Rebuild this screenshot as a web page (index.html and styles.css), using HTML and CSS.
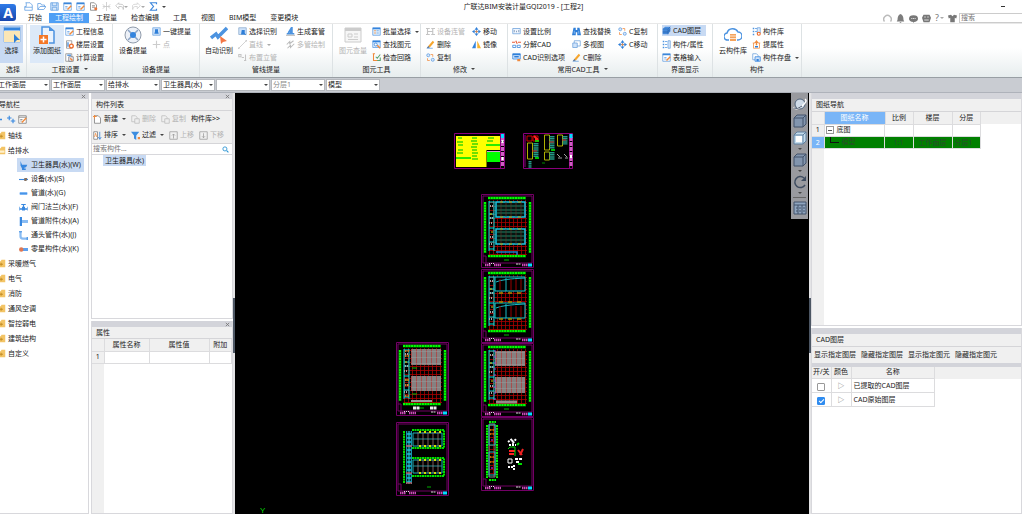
FILE: index.html
```html
<!DOCTYPE html>
<html lang="zh-CN">
<head>
<meta charset="utf-8">
<title>广联达BIM安装计量GQI2019 - [工程2]</title>
<link rel="stylesheet" href="styles.css">
</head>
<body>
<svg class="defs" aria-hidden="true">
  <defs>
    <symbol id="close" viewBox="0 0 12 12"><path d="M2 2l8 8M10 2l-8 8" stroke="#777" stroke-width="2"/></symbol>
    <symbol id="doc" viewBox="0 0 12 12"><path d="M2 1h6l3 3v7H1V6h2V1" fill="none" stroke="#5d9be0"/><path d="M1 7h10" stroke="#5d9be0"/></symbol>
    <symbol id="open" viewBox="0 0 12 12"><path d="M1 10V2h4l1 2h4v2M1 10l3-4h8l-3 4z" fill="none" stroke="#5d9be0"/></symbol>
    <symbol id="save" viewBox="0 0 12 12"><path d="M1 1h10v10H1z" fill="#d7e8fb" stroke="#5d9be0"/><path d="M3 1v4h6V1M3 11V7h6v4" fill="none" stroke="#5d9be0"/></symbol>
    <symbol id="form" viewBox="0 0 12 12"><path d="M1 1h10v10H1z" fill="#fff" stroke="#5d9be0"/><path d="M1 2h10" stroke="#3b86d8" stroke-width="2"/><path d="M3 6h3M3 8h3" stroke="#5d9be0"/><path d="M6 10l5-5" stroke="#f08a3c" stroke-width="2"/></symbol>
    <symbol id="page" viewBox="0 0 12 12"><path d="M2 1h5l3 3v7H2z" fill="#fff" stroke="#777"/><path d="M4 5h4M4 7h4" stroke="#777"/><circle cx="9" cy="9" r="2" fill="#e8743b"/></symbol>
    <symbol id="split" viewBox="0 0 12 12"><path d="M6 0v12M1 3l3 3-3 3M11 3L8 6l3 3M1 6h10" fill="none" stroke="#c4c4c4"/></symbol>
    <symbol id="undo" viewBox="0 0 12 12"><path d="M5 1L1 5l4 4V6h3q3 0 3 4 2-7-3-7H5z" fill="none" stroke="#bbb"/></symbol>
    <symbol id="redo" viewBox="0 0 12 12"><path d="M7 1l4 4-4 4V6H4q-3 0-3 4-2-7 3-7h3z" fill="none" stroke="#ccc"/></symbol>
    <symbol id="sigma" viewBox="0 0 12 12"><path d="M10 3V1H2l4 5-4 5h8V9" fill="none" stroke="#3c86dc" stroke-width="1.6"/></symbol>
    <symbol id="gear" viewBox="0 0 12 12"><path d="M2 1h7v10H2z" fill="#fff" stroke="#888"/><path d="M4 3v6" stroke="#5d9be0" stroke-width="2"/><circle cx="8.500" cy="8" r="2.500" fill="#fff" stroke="#f06a28" stroke-width="1.800"/></symbol>
    <symbol id="calc" viewBox="0 0 12 12"><path d="M1 1h8v10H1z" fill="#fff" stroke="#888"/><path d="M3 3h5" stroke="#5d9be0" stroke-width="2"/><path d="M5 5h6v6H5z" fill="#eef" stroke="#777"/><path d="M7 7l3 3" stroke="#f08a3c" stroke-width="2"/></symbol>
    <symbol id="pick" viewBox="0 0 12 12"><path d="M1 1h10v10H1z" fill="#cfe3fa" stroke="#72a6df"/><path d="M4 3h4v3l1 3H3l1-3z" fill="#2f7fd8"/></symbol>
    <symbol id="plus" viewBox="0 0 12 12"><path d="M6 1v10M1 6h10" stroke="#ccc" stroke-width="1.500"/></symbol>
    <symbol id="choose" viewBox="0 0 12 12"><path d="M1 1h10v9H1z" fill="#cfe3fa" stroke="#8aa9cc"/><path d="M5 4h4v4l2 3-3-1H4z" fill="#2f7fd8"/></symbol>
    <symbol id="line" viewBox="0 0 12 12"><path d="M1 11L11 1" stroke="#c4c4c4"/><path d="M0 10h2v2H0zM10 0h2v2h-2z" fill="#ccc"/></symbol>
    <symbol id="pipes" viewBox="0 0 12 12"><path d="M1 6l4-4v3l5-4M2 11l4-4v3l5-5" fill="none" stroke="#bbb" stroke-width="1.400"/></symbol>
    <symbol id="riser" viewBox="0 0 12 12"><path d="M1 2h3v3H1zM5 6h3M10 2v8M8 10h3" fill="none" stroke="#c4c4c4" stroke-width="1.400"/></symbol>
    <symbol id="sleeve" viewBox="0 0 12 12"><path d="M1 9h10M3 8l3-5v5M8 0v9" fill="none" stroke="#4c93e0" stroke-width="2"/><path d="M0 11h12" stroke="#999"/></symbol>
    <symbol id="batch" viewBox="0 0 12 12"><path d="M1 1h10v10H1z" fill="#e2effc" stroke="#5d9be0"/><path d="M1 2h10" stroke="#3484de" stroke-width="2"/><path d="M3 5h2M3 8h2" stroke="#f08a3c" stroke-width="1.500"/><path d="M6 5h3M6 8h3" stroke="#5d9be0"/></symbol>
    <symbol id="find" viewBox="0 0 12 12"><path d="M1 1h10v9H1z" fill="#dcecff" stroke="#5d9be0"/><path d="M1 2h10" stroke="#3484de" stroke-width="2"/><circle cx="5" cy="6" r="2" fill="#fff" stroke="#2f7fd8"/><path d="M7 7l4 4" stroke="#f08a3c" stroke-width="2"/></symbol>
    <symbol id="loop" viewBox="0 0 12 12"><path d="M1 1h3M2 1v9h6" fill="none" stroke="#f08a3c" stroke-width="1.400"/><path d="M5 5l2 2 4-5M7 10h4V6" fill="none" stroke="#5aa36f" stroke-width="1.400"/></symbol>
    <symbol id="link" viewBox="0 0 12 12"><path d="M0 2h5M7 2h5M2 2v8M9 2v8M0 10h5M7 10h5M2 6h7" stroke="#c4c4c4" stroke-width="1.500"/></symbol>
    <symbol id="erase" viewBox="0 0 12 12"><path d="M3 8l6-7 2 2-6 7z" fill="#f6a52d"/><path d="M3 8l2 2-4 1z" fill="#4b5d78"/><path d="M1 11h8" stroke="#5d9be0"/></symbol>
    <symbol id="copy" viewBox="0 0 12 12"><circle cx="3" cy="3" r="2" fill="#d8e9fb" stroke="#5d9be0"/><circle cx="9" cy="9" r="2" fill="#d8e9fb" stroke="#5d9be0"/><path d="M6 2h3v3M2 7v3h3" fill="none" stroke="#f08a3c"/></symbol>
    <symbol id="move" viewBox="0 0 12 12"><path d="M6 0l2.500 3.500h-5zM6 12l2.500-3.500h-5zM0 6l3.500-2.500v5zM12 6L8.500 3.500v5z" fill="#2f7fd8"/><path d="M6 3v6M3 6h6" stroke="#2f7fd8"/><circle cx="6" cy="6" r="1.500" fill="#f08a3c"/></symbol>
    <symbol id="mirror" viewBox="0 0 12 12"><path d="M5 1v10H0z" fill="#3484de"/><path d="M7 1v10h5z" fill="#f9b52f"/></symbol>
    <symbol id="scale" viewBox="0 0 12 12"><path d="M1 2h10v7H1z" fill="#eff6ff" stroke="#6a9fda"/><path d="M3 4v3M6 5v2M9 4v3" stroke="#6b86a8"/></symbol>
    <symbol id="explode" viewBox="0 0 12 12"><path d="M0 3h4M8 3h4M5 1l2 4" stroke="#e95b36" stroke-width="1.500"/><path d="M1 7h4v3H1zM7 7h4v3H7z" fill="none" stroke="#2f7fd8"/></symbol>
    <symbol id="cadopt" viewBox="0 0 12 12"><path d="M1 1h10v7H1z" fill="#dcecff" stroke="#2f7fd8"/><path d="M1 2h10M3 5h6" stroke="#2f7fd8" stroke-width="2"/><path d="M7 8h4v3H7z" fill="#f08a3c"/></symbol>
    <symbol id="bino" viewBox="0 0 12 12"><path d="M2 1h3v3h2V1h3l2 10H7V7H5v4H0z" fill="#2f7fd8"/><path d="M3 5v4M9 5v4" stroke="#9bc7f7"/></symbol>
    <symbol id="views" viewBox="0 0 12 12"><path d="M3 1h8v7H3z" fill="#fff" stroke="#6a9fda"/><path d="M1 4h6v6H1z" fill="#cfe3fa" stroke="#6a9fda"/></symbol>
    <symbol id="layers" viewBox="0 0 12 12"><path d="M4 1h7v6l-3 4H1V4z" fill="#4a90e2"/><path d="M1 4h7v7M8 4l3-3M1 7h7l3-4M1 9h7l3-4" fill="none" stroke="#2c68b4"/></symbol>
    <symbol id="attrs" viewBox="0 0 12 12"><path d="M1 1h2v2H1zM1 5h2v2H1zM1 9h2v2H1z" fill="#4c93e0"/><path d="M4 2h3M4 6h3M4 10h3" stroke="#4c93e0"/><path d="M8 1h3v10H8z" fill="#dcecff" stroke="#6a9fda"/></symbol>
    <symbol id="parts" viewBox="0 0 12 12"><path d="M1 1h2v2H1zM1 5h2v2H1zM1 9h2v2H1z" fill="#4c93e0"/><path d="M4 2h3M4 6h3" stroke="#4c93e0"/><path d="M7 1h4v7H7z" fill="#dcecff" stroke="#6a9fda"/><circle cx="9" cy="9" r="2" fill="#fff" stroke="#f06a28" stroke-width="1.500"/></symbol>
    <symbol id="raise" viewBox="0 0 12 12"><path d="M6 0l3 4H7v3H5V4H3z" fill="#f08a3c"/><path d="M1 4h3M8 4h3M2 4v7h8V4" fill="none" stroke="#f08a3c"/><path d="M4 9h4" stroke="#2f7fd8" stroke-width="2"/></symbol>
    <symbol id="store" viewBox="0 0 12 12"><path d="M1 1h5l2 2v6H1z" fill="#fff" stroke="#6a9fda"/><path d="M4 5h7v6H4z" fill="#cfe3fa" stroke="#3484de"/><path d="M6 8h3v3H6z" fill="#3484de"/></symbol>
    <symbol id="new" viewBox="0 0 12 12"><path d="M2 1h5l3 3v7H2z" fill="#fff" stroke="#777"/><path d="M2 0v5M0 2h5" stroke="#f08a3c" stroke-width="1.300"/></symbol>
    <symbol id="graydoc" viewBox="0 0 12 12"><path d="M1 1h5l2 2v6H1z" fill="none" stroke="#bbb"/><path d="M5 5h6v6H5z" fill="#eee" stroke="#bbb"/></symbol>
    <symbol id="sort" viewBox="0 0 12 12"><path d="M1 1h5v10H1z" fill="#fff" stroke="#777"/><path d="M2 8l1.500-5L5 8" fill="none" stroke="#f08a3c"/><path d="M9 1v10M7 8l2 3 2-3" fill="none" stroke="#2f7fd8"/></symbol>
    <symbol id="filter" viewBox="0 0 12 12"><path d="M0 1h11L7 6v6L4 10V6z" fill="#3c8de0"/><path d="M9 8h3v3H9z" fill="#f08a3c"/></symbol>
    <symbol id="up" viewBox="0 0 12 12"><path d="M1 1h10v10H1zM6 10V4M4 6l2-2 2 2" fill="none" stroke="#999"/></symbol>
    <symbol id="down" viewBox="0 0 12 12"><path d="M1 1h10v10H1zM6 3v6M4 7l2 2 2-2" fill="none" stroke="#999"/></symbol>
    <symbol id="folder" viewBox="0 0 12 12"><path d="M0 3h5l1-2h5v10H0z" fill="#f3c465"/><path d="M3 7h5M5.500 5v4" stroke="#b98318"/></symbol>
    <symbol id="folder-open" viewBox="0 0 12 12"><path d="M0 3h5l1-2h5v10H0z" fill="#f3c465"/><path d="M1 6h9v3H1z" fill="#fff1cd"/></symbol>
    <symbol id="toilet" viewBox="0 0 12 12"><path d="M2 0l2 5h7q-1 4-4 4v1h2v2H4v-2L2 6z" fill="#3888e0"/></symbol>
    <symbol id="device" viewBox="0 0 12 12"><path d="M0 6h12" stroke="#3888e0" stroke-width="1.500"/><path d="M7 4h4l-1 4H7z" fill="#85705f"/></symbol>
    <symbol id="pipe" viewBox="0 0 12 12"><path d="M1 4h10v4H1z" fill="#7db6f5"/><path d="M1 6h10" stroke="#3888e0"/></symbol>
    <symbol id="valve" viewBox="0 0 12 12"><path d="M0 5v5M12 5v5M3 2h6M6 2v5" stroke="#3888e0" stroke-width="1.500"/><path d="M1 7h10v2H1zM4 5h4v5H4z" fill="#3888e0"/></symbol>
    <symbol id="fitting" viewBox="0 0 12 12"><path d="M1 0h3v12H1z" fill="#3888e0"/><path d="M4 4h8v4H4z" fill="#8abcf2"/></symbol>
    <symbol id="elbow" viewBox="0 0 12 12"><path d="M2 1v6q0 3 3 3h6" fill="none" stroke="#8abcf2" stroke-width="3"/><path d="M0 1h4M11 8v4" stroke="#3888e0" stroke-width="1.500"/></symbol>
    <symbol id="misc" viewBox="0 0 12 12"><path d="M4 4h8v4H4z" fill="#5da0ee"/><circle cx="3" cy="6" r="3" fill="#dd7753"/></symbol>
    <symbol id="cube" viewBox="0 0 14 14"><path d="M1 4h9v9H1zM1 4l3-3h9v9l-3 3M10 4l3-3" fill="#8295ae" stroke="#43536b"/></symbol>

    <pattern id="red-grid" width="4" height="4" patternUnits="userSpaceOnUse"><path d="M0 .5h4M.5 0v4" stroke="#a80000" stroke-width=".8"/></pattern>
    <pattern id="gray-grid" width="5" height="6" patternUnits="userSpaceOnUse"><path d="M0 0h5v6H0z" fill="#858080"/><path d="M.5 0v6" stroke="#b04040" stroke-width=".8"/><path d="M0 3.500h5" stroke="#9a9a9a" stroke-width=".5"/></pattern>
    <g id="sheet-frame">
      <path d="M.5.5h52v73H.5zM2 2v67h49V2zM2 62h3v7" fill="none" stroke="#720065"/>
      <path d="M4 71h6M13 71h7M41 71h6" stroke="#c94bb7" stroke-width="2.500" stroke-dasharray="1.500 .5"/>
      <path d="M8 69.500h6" stroke="#ddd" stroke-dasharray="1 1"/><path d="M35 70h5" stroke="#ddd" stroke-dasharray="2 .5"/><path d="M47 71h4" stroke="#0df" stroke-width="3"/>
    </g>
    <g id="axes">
      <path d="M7 4h38M7 62h38M4 8v51M49 8v51" stroke="#007500" stroke-width="3"/>
      <path d="M7 4h38M7 62h38M4 8v51M49 8v51" stroke="#0f0" stroke-width="2" stroke-dasharray="2 .7"/>
      <path d="M8 6h38v55H8z" fill="url(#red-grid)"/><path d="M23 66h5" stroke="#0b0"/>
    </g>
    <g id="core"><path d="M8 7v50M13 7v50M8 8h5M8 20h5M8 24h5M8 34h5M8 48h5M8 55h5" fill="none" stroke="#0dd"/><path d="M9 12h3M9 24h4M8 29h3M9 43h4M8 50h3" stroke="#a0a8a8" stroke-width="2" stroke-dasharray="1 1"/><path d="M9 20h2M10 38h2" stroke="#dc0"/></g>
  </defs>
</svg>

<div class="app">
  <header class="titlebar">
    <button class="logo" aria-label="应用菜单">A</button>
    <div class="title-rows">
      <div class="title-row">
        <div class="quick">
          <button aria-label="新建"><svg><use href="#doc"/></svg></button><button aria-label="打开"><svg><use href="#open"/></svg></button><button aria-label="保存"><svg><use href="#save"/></svg></button><button aria-label="导入"><svg><use href="#form"/></svg></button><button aria-label="导出"><svg><use href="#form"/></svg></button><button aria-label="报表"><svg><use href="#page"/></svg></button><button aria-label="拆分"><svg><use href="#split"/></svg></button><button aria-label="撤销"><svg><use href="#undo"/></svg><i class="caret pale"></i></button><button aria-label="恢复"><svg><use href="#redo"/></svg><i class="caret pale"></i></button><button aria-label="汇总"><svg><use href="#sigma"/></svg></button><button aria-label="更多"><i class="caret"></i></button>
        </div>
        <h1>广联达BIM安装计量GQI2019 - [工程2]</h1>
        <button class="minimize" aria-label="最小化"></button>
      </div>
      <div class="tab-row">
        <nav class="tabs"><a href="#">开始</a><a href="#" class="active">工程绘制</a><a href="#">工程量</a><a href="#">检查编辑</a><a href="#">工具</a><a href="#">视图</a><a href="#">BIM模型</a><a href="#">变更模块</a></nav>
        <div class="account">
          <button aria-label="客服"><svg viewBox="0 0 12 12"><path d="M2 10a5 5 0 1 1 8 0" fill="none" stroke="#bbb" stroke-width="2"/></svg></button>
          <button aria-label="通知"><svg viewBox="0 0 12 12"><path d="M6 0q4 1 4 8l1 2H1l1-2q0-7 4-8M5 11h2v1H5z" fill="#7d7d7d"/></svg></button>
          <button aria-label="消息"><svg viewBox="0 0 12 12"><ellipse cx="6" cy="6" rx="6" ry="4.500" fill="#777"/><path d="M5 9h3l-2 3z" fill="#777"/><path d="M3 6h6" stroke="#fff" stroke-dasharray="1.500 .7"/></svg></button>
          <button aria-label="皮肤"><svg viewBox="0 0 12 12"><path d="M2 1h8l2 4-2 6H2L0 5z" fill="#777"/><path d="M3 4h2M7 4h2M3 8h6" stroke="#fff"/></svg></button>
          <button class="help" aria-label="帮助">?<i class="caret pale"></i></button>
          <button aria-label="换肤"><svg viewBox="0 0 12 12"><path d="M0 2l4-1 2 2 2-2 4 1-1 4-2-1v6H3V5L1 6z" fill="#777"/></svg></button>
          <input type="text" placeholder="搜索" aria-label="搜索">
        </div>
      </div>
    </div>
  </header>

  <section class="ribbon">
    <div class="group g-select"><div class="body"><button class="big on"><svg viewBox="0 0 18 18"><path d="M1 1h16v15H1z" fill="#fff" stroke="#8ab4e4"/><path d="M1 3h16" stroke="#3484de" stroke-width="3"/><path d="M1 5h16v11H1z" fill="#fbe6b5"/><path d="M11 8l6 6-3 0-3 3z" fill="#2f7fd8"/></svg>选择</button></div><h2>选择</h2></div>
    <div class="group g-project"><div class="body">
      <button class="big soft"><svg viewBox="0 0 18 18"><path d="M4 9V1h7l5 4v12h-5" fill="#eaf3fd" stroke="#4c93e0" stroke-width="1.500"/><path d="M11 1v4h5" fill="#4c93e0"/><path d="M1 9h9v9H1z" fill="#f47726"/><path d="M5.500 10.500v6M2.500 13.500h6" stroke="#fff" stroke-width="1.500"/></svg>添加图纸</button>
      <div class="col"><button><svg><use href="#form"/></svg>工程信息</button><button><svg><use href="#gear"/></svg>楼层设置</button><button><svg><use href="#calc"/></svg>计算设置</button></div>
    </div><h2>工程设置<i class="caret"></i></h2></div>
    <div class="group g-device"><div class="body">
      <button class="big"><svg viewBox="0 0 18 18"><circle cx="9" cy="9" r="8" fill="#edf1f8" stroke="#909bab"/><path d="M4 4l10 10M14 4L4 14" stroke="#8aa4c6" stroke-width="1.500"/><circle cx="9" cy="9" r="3" fill="#3484de"/></svg>设备提量</button>
      <div class="col"><button><svg><use href="#pick"/></svg>一键提量</button><button disabled><svg><use href="#plus"/></svg>点</button></div>
    </div><h2>设备提量</h2></div>
    <div class="group g-line"><div class="body">
      <button class="big"><svg viewBox="0 0 18 18"><path d="M1 12l5-4 2 3 9-9" fill="none" stroke="#4c93e0" stroke-width="3.500"/><path d="M10 10l7 5-4 1-2 2z" fill="#f47745"/></svg>自动识别</button>
      <div class="col"><button><svg><use href="#choose"/></svg>选择识别</button><button disabled><svg><use href="#line"/></svg>直线<i class="caret pale"></i></button><button disabled><svg><use href="#riser"/></svg>布置立管</button></div>
      <div class="col"><button><svg><use href="#sleeve"/></svg>生成套管</button><button disabled><svg><use href="#pipes"/></svg>多管绘制</button></div>
    </div><h2>管线提量</h2></div>
    <div class="group g-element"><div class="body">
      <button class="big" disabled><svg viewBox="0 0 18 18"><path d="M1 2h16v14H1z" fill="#f6f6f6" stroke="#ccc"/><path d="M1 3.500h16" stroke="#ccc" stroke-width="3"/><path d="M4 8h4v3H4zM10 8h4M10 11h4M4 13.500h10" fill="none" stroke="#ccc"/></svg>图元查量</button>
      <div class="col"><button><svg><use href="#batch"/></svg>批量选择<i class="caret"></i></button><button><svg><use href="#find"/></svg>查找图元</button><button><svg><use href="#loop"/></svg>检查回路</button></div>
    </div><h2>图元工具</h2></div>
    <div class="group g-modify"><div class="body">
      <div class="col"><button disabled><svg><use href="#link"/></svg>设备连管</button><button><svg><use href="#erase"/></svg>删除</button><button><svg><use href="#copy"/></svg>复制</button></div>
      <div class="col"><button><svg><use href="#move"/></svg>移动</button><button><svg><use href="#mirror"/></svg>镜像</button></div>
    </div><h2>修改<i class="caret"></i></h2></div>
    <div class="group g-cad"><div class="body">
      <div class="col"><button><svg><use href="#scale"/></svg>设置比例</button><button><svg><use href="#explode"/></svg>分解CAD</button><button><svg><use href="#cadopt"/></svg>CAD识别选项</button></div>
      <div class="col"><button><svg><use href="#bino"/></svg>查找替换</button><button><svg><use href="#views"/></svg>多视图</button><button><svg><use href="#erase"/></svg>C删除</button></div>
      <div class="col"><button><svg><use href="#copy"/></svg>C复制</button><button><svg><use href="#move"/></svg>C移动</button></div>
    </div><h2>常用CAD工具<i class="caret"></i></h2></div>
    <div class="group g-view"><div class="body">
      <div class="col"><button class="on"><svg><use href="#layers"/></svg>CAD图层</button><button><svg><use href="#attrs"/></svg>构件/属性</button><button><svg><use href="#form"/></svg>表格输入</button></div>
    </div><h2>界面显示</h2></div>
    <div class="group g-part"><div class="body">
      <button class="big"><svg viewBox="0 0 18 18"><path d="M5 14H4a3.500 3.500 0 0 1-1-7 6 6 0 0 1 11-1 4 4 0 0 1 0 8h-1" fill="none" stroke="#4c93e0" stroke-width="1.500"/><path d="M6 8h6v7H6z" fill="#f4a35c"/><path d="M6 10h6M6 12.500h6" stroke="#fff" stroke-width=".7"/></svg>云构件库</button>
      <div class="col"><button><svg><use href="#parts"/></svg>构件库</button><button><svg><use href="#raise"/></svg>提属性</button><button><svg><use href="#store"/></svg>构件存盘<i class="caret"></i></button></div>
    </div><h2>构件</h2></div>
  </section>

  <div class="context">
    <span class="pickbox"><select aria-label="楼层"><option>工作面层</option></select></span>
    <span class="pickbox"><select aria-label="工作面"><option>工作面层</option></select></span>
    <span class="pickbox"><select aria-label="专业"><option>给排水</option></select></span>
    <span class="pickbox"><select aria-label="构件类型"><option>卫生器具(水)</option></select></span>
    <span class="pickbox"><select aria-label="构件"><option></option></select></span>
    <span class="pickbox faint"><select aria-label="分层"><option>分层1</option></select></span>
    <span class="pickbox"><select aria-label="视图"><option>模型</option></select></span>
  </div>

  <main class="work">
    <aside class="panel nav">
      <div class="grip"><button aria-label="关闭"><svg><use href="#close"/></svg></button></div>
      <h3>导航栏</h3>
      <div class="tools">
        <button aria-label="折叠"><svg viewBox="0 0 12 12"><path d="M0 6h8" stroke="#3888e0" stroke-width="2"/></svg></button>
        <button aria-label="展开"><svg viewBox="0 0 12 12"><path d="M3 1v6M0 4h6M8 5v6M5 8h6" stroke="#3888e0" stroke-width="1.500"/></svg></button>
        <button aria-label="编辑"><svg viewBox="0 0 12 12"><path d="M1 1h10v10H1z" fill="#fff" stroke="#777"/><path d="M1 3h10M3 6h3M3 8h2" stroke="#777"/><path d="M5 10l6-6" stroke="#f08a3c" stroke-width="2"/></svg></button>
      </div>
      <ul class="tree">
        <li><a href="#"><svg><use href="#folder"/></svg>轴线</a></li>
        <li><a href="#"><svg><use href="#folder-open"/></svg>给排水</a>
          <ul>
            <li><a href="#" class="on"><svg><use href="#toilet"/></svg>卫生器具(水)(W)</a></li>
            <li><a href="#"><svg><use href="#device"/></svg>设备(水)(S)</a></li>
            <li><a href="#"><svg><use href="#pipe"/></svg>管道(水)(G)</a></li>
            <li><a href="#"><svg><use href="#valve"/></svg>阀门法兰(水)(F)</a></li>
            <li><a href="#"><svg><use href="#fitting"/></svg>管道附件(水)(A)</a></li>
            <li><a href="#"><svg><use href="#elbow"/></svg>通头管件(水)(J)</a></li>
            <li><a href="#"><svg><use href="#misc"/></svg>零星构件(水)(K)</a></li>
          </ul></li>
        <li><a href="#"><svg><use href="#folder"/></svg>采暖燃气</a></li>
        <li><a href="#"><svg><use href="#folder"/></svg>电气</a></li>
        <li><a href="#"><svg><use href="#folder"/></svg>消防</a></li>
        <li><a href="#"><svg><use href="#folder"/></svg>通风空调</a></li>
        <li><a href="#"><svg><use href="#folder"/></svg>智控弱电</a></li>
        <li><a href="#"><svg><use href="#folder"/></svg>建筑结构</a></li>
        <li><a href="#"><svg><use href="#folder"/></svg>自定义</a></li>
      </ul>
    </aside>

    <div class="stack mid">
      <section class="panel">
        <div class="grip"><button aria-label="关闭"><svg><use href="#close"/></svg></button></div>
        <h3>构件列表</h3>
        <div class="tools two">
          <div><button><svg><use href="#new"/></svg>新建<i class="caret"></i></button><button disabled><svg><use href="#graydoc"/></svg>删除</button><button disabled><svg><use href="#graydoc"/></svg>复制</button><button>构件库&gt;&gt;</button></div>
          <div><button><svg><use href="#sort"/></svg>排序<i class="caret"></i></button><button><svg><use href="#filter"/></svg>过滤<i class="caret"></i></button><button disabled><svg><use href="#up"/></svg>上移</button><button disabled><svg><use href="#down"/></svg>下移</button></div>
        </div>
        <div class="search"><input type="text" placeholder="搜索构件..." aria-label="搜索构件"><svg viewBox="0 0 12 12"><circle cx="5" cy="5" r="3.500" fill="none" stroke="#2994d4" stroke-width="1.500"/><path d="M8 8l3 3" stroke="#2994d4" stroke-width="2"/></svg></div>
        <a href="#" class="component">卫生器具(水)</a>
      </section>
      <section class="panel">
        <div class="grip"><button aria-label="关闭"><svg><use href="#close"/></svg></button></div>
        <h3>属性</h3>
        <div class="sheet">
          <table class="props"><thead><tr><th></th><th>属性名称</th><th>属性值</th><th>附加</th></tr></thead><tbody><tr><th>1</th><td></td><td></td><td></td></tr></tbody></table>
        </div>
      </section>
    </div>
    <div class="splitter"><button aria-label="收起左侧"></button></div>

    <section class="canvas">
      <svg class="drawing" viewBox="235 93 574 421" role="img" aria-label="图纸">
        <g transform="translate(454 133)">
          <path d="M.5.500h50v35H.5z" fill="none" stroke="#8a007c"/>
          <path d="M2 3h44v14H32.500v17H2z" fill="#ff0"/><path d="M33 19h13v10H33z" fill="#0f0"/><path d="M33 18.500h13" stroke="#d49fd4"/>
          <path d="M4 5h4M3 9h6M4 12h5M18 5h5M17 8h6M18 11h6M17 14h6M18 17h5M18 20h6M18 23h5M18 26h6M34 5h6M33 8h6M4 17h5M3 20h6" stroke="#6fdf00" stroke-width="2"/>
          <path d="M2 25h15M32 12h14" stroke="#2bea00" stroke-width="2"/>
          <path d="M48.500 4v30" stroke="#d05cc4" stroke-width="3" stroke-dasharray="4 1"/><path d="M48.500 1v4" stroke="#0df" stroke-width="3"/><path d="M46.500 1v34" stroke="#8a007c"/><path d="M48.500 7v3M48.500 24v3" stroke="#fff" stroke-width="2"/>
        </g>
        <g transform="translate(523 133)" fill="none">
          <path d="M.5.500h49v35H.5zM46.500 1v34M2 2v32" stroke="#8a007c"/>
          <path d="M4 3h5v5H4zM10 3h5v5h-5z" stroke="#c00"/><path d="M11 3l4 4M12 6h3" stroke="#f22" stroke-width="2"/><path d="M12 8h4M12 25h4M28 17h4" stroke="#0f0" stroke-width="1.500"/>
          <path d="M4.500 10h5v16h-5zM21.500 2h5v15h-5zM21.500 19h5v8h-5zM34.500 2h5v11h-5z" stroke="#b0b000"/>
          <path d="M13 10v14M29 3v13M29 19v8M42 3v9" stroke="#249a86" stroke-width="5" stroke-dasharray="1.500 .6"/><path d="M7 28v7" stroke="#249a86" stroke-width="3" stroke-dasharray="1.500 .6"/>
          <path d="M9 18h5M26 9h5M39 7h4" stroke="#c22"/><path d="M34 21l3 3M35 25h4M42 25h3M41 21l3 3" stroke="#a0a0a0"/><path d="M19 30h3" stroke="#080"/>
          <path d="M48 4v30" stroke="#d05cc4" stroke-width="3" stroke-dasharray="4 1"/><path d="M48 1v4" stroke="#0df" stroke-width="3"/><path d="M48 22v3" stroke="#fff" stroke-width="2"/>
        </g>
        <g transform="translate(481 194)">
          <use href="#sheet-frame"/><use href="#axes"/><use href="#core"/>
          <path d="M15 8h29v15H15zM15 35h29v15H15z" fill="#061410" stroke="#18c7e4" stroke-width="1.500"/><path d="M16 12h27M16 16h27M16 19h27M16 38h27M16 42h27M16 46h27" stroke="#1c8062"/>
          <path d="M20 8v15M25 8v15M30 8v15M35 8v15M40 8v15M20 35v15M25 35v15M30 35v15M35 35v15M40 35v15" stroke="#62302a" stroke-width=".7"/>
          <path d="M19 8h22M19 23h22M19 35h22M19 50h22" stroke="#bfa600" stroke-dasharray="3 6"/><path d="M15 58h21v3" fill="none" stroke="#1683ca" stroke-width="1.500"/>
        </g>
        <g transform="translate(481 269)">
          <use href="#sheet-frame"/><use href="#axes"/><use href="#core"/>
          <path d="M14 8h30v14H14zM14 34h30v15H14z" fill="#000" stroke="#18cbd0"/><path d="M15 13q6-3 29-4M25 9v13M15 39q6-3 29-4M25 35v14" fill="none" stroke="#18bcc8"/>
          <path d="M19 10v11M30 10v11M35 10v11M40 10v11M19 37v11M30 37v11M35 37v11M40 37v11" stroke="#900"/><path d="M18 24h24M18 33h24M18 50h24" stroke="#a88d00" stroke-width="1.500" stroke-dasharray="4 5"/>
        </g>
        <g transform="translate(481 343)">
          <use href="#sheet-frame"/><use href="#axes"/><use href="#core"/>
          <path d="M14 8h30v15H14zM14 34h30v16H14z" fill="url(#gray-grid)"/><path d="M15 59h21" stroke="#918a8a" stroke-width="3"/><path d="M14 7v52" stroke="#94d" stroke-dasharray="2 4"/>
        </g>
        <g transform="translate(481 417)">
          <use href="#sheet-frame"/>
          <path d="M6 8v53M16 8v53M8 5h7M8 63h7" stroke="#0f0" stroke-width="2" stroke-dasharray="2 .7"/>
          <path d="M8 7h6v53H8z" fill="url(#red-grid)" stroke="#7a8c8c"/><path d="M8 8h6v20H8zM8 35h6v23H8z" fill="none" stroke="#27b5bd"/><path d="M9 13h4M9 17h4M9 40h4M9 45h4" stroke="#bf6500" stroke-width="2" stroke-dasharray="1.500 1"/><path d="M10 23h2M10 51h2" stroke="#f2f"/>
          <path d="M27 25l4-3 1 4 3-4M28 28h7" fill="none" stroke="#fff" stroke-width="2" stroke-dasharray="2 1"/><path d="M28 34h6M28 37h5" stroke="#f22" stroke-width="2"/><path d="M27 32l2-2h5v9" fill="none" stroke="#0d0"/><path d="M37 33l4 5M42 32l-3 6" stroke="#e22" stroke-width="2"/><path d="M27 42h4v4h-4z" fill="none" stroke="#fff"/><path d="M34 42h7M35 45h4" stroke="#fff" stroke-width="2" stroke-dasharray="3 1"/><path d="M27 50h5M33 48v5" stroke="#fff" stroke-width="2" stroke-dasharray="2 1"/><path d="M36 28l2-2M37 47h4" stroke="#0d0" stroke-width="2"/>
        </g>
        <g transform="translate(396 342)">
          <use href="#sheet-frame"/><use href="#axes"/><use href="#core"/>
          <path d="M15 7h30v16H15zM15 34h30v15H15z" fill="url(#gray-grid)"/><path d="M15 59h21" stroke="#999" stroke-width="2"/><path d="M9 9h4M9 14h4M9 38h4M9 43h4M9 54h4" stroke="#c87922" stroke-width="2" stroke-dasharray="1.500 1"/><path d="M16 26h5M16 52h5" stroke="#0b0"/><path d="M17 66h7M34 66h7" stroke="#eee" stroke-width="3" stroke-dasharray="3 .5"/>
        </g>
        <g transform="translate(396 422)">
          <use href="#sheet-frame"/>
          <path d="M8 9v52M16 8h32v18H16M16 36h32v18H16" fill="none" stroke="#0d0" stroke-width="2" stroke-dasharray="2 .5"/>
          <path d="M17 11h29v13H17zM17 38h29v13H17z" fill="#000" stroke="#21afb7"/><path d="M17 17h29M17 44h29" stroke="#278e95"/><path d="M22 10v14M27 10v14M32 10v14M37 10v14M42 10v14M22 38v13M27 38v13M32 38v13M37 38v13M42 38v13" stroke="#b08080" stroke-width=".7"/>
          <path d="M23 10h24M23 24h24M23 38h24M23 51h24" stroke="#d6de00" stroke-width="2" stroke-dasharray="2 3"/>
          <path d="M13 9v53" stroke="#1593ad" stroke-width="6"/><path d="M13 9v53" stroke="#08292f" stroke-width="4" stroke-dasharray="2 2"/><path d="M13 9v53" stroke="#23cbe0"/><path d="M10 24h6M10 51h6M10 61h6" stroke="#f44"/><path d="M31 65h4" stroke="#0a0"/>
        </g>
        <text x="260" y="513" class="axis">Y</text>
      </svg>
      <div class="viewbar">
        <button aria-label="动态观察"><svg viewBox="0 0 14 14"><circle cx="7" cy="7" r="5" fill="#cfdbe8" stroke="#52657d"/><path d="M1 10q1 4 8-1 6-5 3-7" fill="none" stroke="#fff" stroke-width="1.500"/><path d="M1 11q3 2 8-2" fill="none" stroke="#43536b"/></svg></button>
        <button aria-label="三维"><svg><use href="#cube"/></svg></button>
        <button aria-label="俯视"><svg viewBox="0 0 14 14"><path d="M1 4h9v9H1zM1 4l3-3h9v9l-3 3M10 4l3-3" fill="#c3dcec" stroke="#5f7f9f"/><path d="M3 5h6v6H3z" fill="#fff"/></svg><i class="caret"></i></button>
        <button aria-label="着色"><svg><use href="#cube"/></svg><i class="caret"></i></button>
        <button aria-label="旋转"><svg viewBox="0 0 14 14"><path d="M12 10a5.500 5.500 0 1 1-1-7" fill="none" stroke="#3f4d61" stroke-width="1.500"/><path d="M13 1v5H8z" fill="#3f4d61"/></svg><i class="caret"></i></button>
        <hr>
        <button aria-label="表格"><svg viewBox="0 0 14 14"><path d="M1 1h12v12H1z" fill="#8fa5bf" stroke="#43536b"/><path d="M1 4h12M5 4v9M9 4v9M3 7h2M6 7h2M10 7h2M3 10h2M6 10h2M10 10h2" stroke="#43536b"/></svg></button>
      </div>
    </section>

    <div class="splitter"><button aria-label="收起右侧"></button></div>
    <div class="stack right">
      <section class="panel">
        <div class="grip"></div>
        <h3>图纸导航</h3>
        <div class="sheet">
          <table class="drawings"><thead><tr><th></th><th class="sorted">图纸名称</th><th>比例</th><th>楼层</th><th>分层</th></tr></thead>
          <tbody><tr><th>1</th><td><button class="toggle" aria-label="折叠底图"></button>底图</td><td></td><td></td><td></td></tr>
          <tr class="picked"><th>2</th><td><i class="branch"></i>模型</td><td>1:1</td><td>工作面层</td><td>分层1</td></tr></tbody></table>
        </div>
      </section>
      <section class="panel">
        <div class="grip"></div>
        <h3>CAD图层</h3>
        <div class="layer-tools"><button>显示指定图层</button><button>隐藏指定图层</button><button>显示指定图元</button><button>隐藏指定图元</button></div>
        <div class="layer-sheet">
        <table class="layers"><thead><tr><th>开/关</th><th>颜色</th><th>名称</th></tr></thead>
        <tbody><tr><td><input type="checkbox" id="l1"></td><td><span class="tri">▷</span></td><td><label for="l1">已提取的CAD图层</label></td></tr>
        <tr><td><input type="checkbox" id="l2" checked></td><td><span class="tri">▷</span></td><td><label for="l2">CAD原始图层</label></td></tr></tbody></table>
        </div>
      </section>
    </div>
  </main>
</div>
</body>
</html>
```
FILE: styles.css
```css
* { box-sizing: border-box; }

body, h1, h2, h3, ul { margin: 0; padding: 0; }

body {
  font: 7px/10px "Noto Sans", "Noto Sans CJK SC", sans-serif;
  color: #222;
  overflow: hidden;
}

h1, h2, h3, th { font-size: 7px; font-weight: 400; }
ul { list-style: none; }
a { color: inherit; text-decoration: none; }
svg { display: block; flex: none; }
.defs { position: absolute; width: 0; height: 0; }

button {
  display: flex;
  align-items: center;
  gap: 2px;
  margin: 0;
  padding: 0;
  border: 0;
  background: none;
  color: inherit;
  font: inherit;
  white-space: nowrap;
}

button:disabled { color: #b4b4b4; }
button svg { width: 9px; height: 9px; }
input, select { font: inherit; color: inherit; border-radius: 0; outline: 0; }
input::placeholder { color: #777; opacity: 1; }

.caret {
  display: inline-block;
  flex: none;
  border: 2px solid transparent;
  border-top-color: #444;
  border-bottom: 0;
  margin-left: 2px;
}
.caret.pale { border-top-color: #aaa; }

.app { display: flex; flex-direction: column; height: 100vh; }

/* Title bar */
.titlebar { display: flex; height: 23px; background: #fff; }

.logo {
  justify-content: center;
  width: 16px;
  height: 17px;
  margin-top: 4px;
  border-radius: 0 3px 3px 0;
  background: linear-gradient(#2f7be8, #1746ad);
  color: #fff;
  font: bold 14px/17px "Open Sans", sans-serif;
}

.title-rows { flex: 1; }
.title-row { display: flex; height: 13px; align-items: center; }
.quick { display: flex; gap: 4px; width: 235px; padding-left: 8px; }
.quick button { gap: 0; }
.quick .caret { margin-left: 0; }
.title-row h1 { flex: 1; text-align: center; padding-right: 205px; }

.minimize { width: 4px; height: 1px; margin-right: 17px; background: #333; }

.tab-row { display: flex; height: 10px; justify-content: space-between; }
.tabs { display: flex; line-height: 10px; padding-left: 5px; }
.tabs a { padding: 0 7px; }
.tabs .active { padding: 0 6px; background: #4f9ff5; color: #fff; }
.account { display: flex; align-items: center; gap: 4px; color: #777; }
.account .help { gap: 0; font-size: 9px; }
.account .caret { margin-left: 1px; }
.account input { width: 63px; height: 10px; margin-left: -2px; border: 1px solid #ccc; border-right: 0; padding: 0 1px; }

/* Ribbon */
.ribbon {
  display: flex;
  height: 55px;
  border-top: 1px solid #e8e8e8;
  border-bottom: 1px solid #999fa4;
  background: linear-gradient(#fff 45%, #e7edee);
}

.group {
  display: flex;
  flex: none;
  flex-direction: column;
  justify-content: space-between;
  border-right: 1px solid #dde2e4;
  padding-top: 1px;
}

.group .body { display: flex; height: 40px; }
.group h2 { height: 12px; line-height: 10px; text-align: center; }
.group h2 .caret { margin: 0 0 2px 4px; }

.big {
  flex: none;
  flex-direction: column;
  width: 34px;
  height: 38px;
  padding-top: 1px;
  gap: 2px;
}
.big svg { width: 18px; height: 18px; }
.big.on, .col .on { background: #c8daf3; }
.big.soft { background: #dce9f8; }
.col { flex: none; }
.col button { height: 13px; }
.col .on { height: 11px; margin-bottom: 2px; padding-right: 5px; }

.g-select { width: 27px; }
.g-select .big { width: 23px; }
.g-project { width: 86px; }
.g-project .body { padding-left: 3px; gap: 1px; }
.g-device { width: 87px; }
.g-device .body { padding-left: 3px; gap: 2px; }
.g-line { width: 133px; }
.g-line .body { padding-left: 2px; gap: 2px; }
.g-line .col { width: 46px; }
.g-element { width: 88px; }
.g-element .body { padding-left: 3px; gap: 2px; }
.g-modify { width: 87px; }
.g-modify .body { padding-left: 5px; }
.g-modify .col:first-child { width: 46px; }
.g-cad { width: 150px; }
.g-cad .body { padding-left: 4px; }
.g-cad .col { width: 46px; }
.g-cad .col:first-child { width: 60px; }
.g-cad .col:last-child { width: 34px; }
.g-view { width: 55px; }
.g-view .body { padding-left: 4px; }
.g-part { width: 89px; }
.g-part .body { padding-left: 3px; gap: 2px; }

/* Context bar */
.context {
  display: flex;
  gap: 1px;
  height: 15px;
  padding: 1px 0;
  margin-left: -4px;
  border-bottom: 1px solid #aeb2ba;
  background: #c9ccd2;
}

.pickbox { position: relative; width: 54px; height: 12px; }
.pickbox select {
  appearance: none;
  width: 100%;
  height: 100%;
  border: 1px solid #b5b8bd;
  padding: 0 1px;
  background: #fff;
}
.pickbox::after {
  content: "";
  position: absolute;
  top: 5px;
  right: 2px;
  border: 2px solid transparent;
  border-top-color: #444;
  border-bottom: 0;
  pointer-events: none;
}
.faint select { color: #888; }

/* Work area */
.work { display: flex; flex: 1; min-height: 0; }

.panel {
  min-width: 0;
  min-height: 0;
  display: flex;
  flex-direction: column;
  border: solid #d8d8dc;
  border-width: 0 1px 1px;
  background: #fff;
  overflow: hidden;
}

.grip { display: flex; justify-content: flex-end; flex: none; height: 6px; padding-right: 2px; background: #d3d4da; }
.grip svg { width: 5px; height: 5px; }

.panel h3 {
  flex: none;
  height: 12px;
  line-height: 11px;
  padding-left: 4px;
  border-bottom: 1px solid #d5d5d8;
  background: #f0f0f0;
}

.nav { flex: 0 0 89px; border-left: 0; margin-right: 2px; }
.panel.nav h3 { padding: 0; margin-left: -1px; }
.tools { display: flex; flex: none; height: 17px; gap: 2px; border-bottom: 1px solid #d5d5d8; background: #f0f0f0; }
.nav .tools { margin-left: -4px; }
.tools.two { flex-direction: column; justify-content: space-around; height: 33px; gap: 0; padding-left: 1px; }
.two div { display: flex; gap: 5px; }

.tree a { display: flex; align-items: center; gap: 2px; height: 15px; }
.tree svg { width: 9px; height: 9px; }
.tree > li > a { margin-left: -3px; }
.tree ul { padding-left: 17px; }
.tree ul a { height: 14px; width: 67px; padding-left: 2px; gap: 3px; white-space: nowrap; }
.tree .on { background: #c8daf3; }

.stack { display: grid; gap: 2px; }
.mid { flex: 0 0 142px; grid-template: 226fr 193fr / 100%; }
.right { flex: 0 0 211px; grid-template: 232fr 186fr / 100%; }
.right .panel h3 { height: 13px; line-height: 12px; }

.search { display: flex; align-items: center; height: 11px; border-bottom: 1px solid #d8d8dc; }
.search input { flex: 1; min-width: 0; height: 10px; border: 0; padding: 0 1px; }
.search svg { width: 7px; height: 7px; margin-right: 3px; }
.component { align-self: flex-start; margin-left: 11px; padding: 0 2px; line-height: 11px; background: #c8daf3; }

.splitter { flex: 0 0 2px; display: flex; align-items: center; background: #e4e4e6; }
.splitter button { width: 2px; height: 55px; margin-top: 44px; background: #4c5663; }

.sheet { flex: 1; background: linear-gradient(90deg, #f0f0f0 12px, #fff 12px); }
table { border-collapse: collapse; table-layout: fixed; }
th, td { height: 12px; padding: 0; border: 1px solid #dcdcde; border-width: 0 1px 1px 0; line-height: 10px; white-space: nowrap; }
thead th { background: #f0f0f0; }
.props { width: 100%; }
.props th:nth-child(1) { width: 12px; }
.props th:nth-child(2) { width: 45px; }
.props th:nth-child(3) { width: 60px; }

.right .sheet { background: linear-gradient(#f0f0f0, #f0f0f0) 0 0 / 100% 12px no-repeat, linear-gradient(90deg, #f0f0f0 12px, #fff 12px); }
.drawings { width: 169px; text-align: center; }
.drawings th:nth-child(1) { width: 12px; }
.drawings th:nth-child(2) { width: 61px; }
.drawings th:nth-child(3) { width: 28px; }
.drawings th:nth-child(4) { width: 39px; }
.drawings .sorted { background: #79b5f7; color: #fff; }
.drawings td:nth-child(2) { display: flex; align-items: center; gap: 3px; padding-left: 1px; }
.toggle { justify-content: center; width: 8px; height: 8px; border: 1px solid #999; background: #fff; }
.toggle::before { content: ""; width: 4px; height: 1px; background: #555; }
.picked th { background: #79b5f7; color: #fff; }
.picked td { background: #008000; color: #2c4a2c; }
.picked td:last-child { text-align: left; padding-left: 2px; }
.branch { width: 9px; height: 6px; margin: 0 0 5px 4px; border: solid #111; border-width: 0 0 1px 1px; }

.layer-tools { display: flex; gap: 5px; flex: none; height: 20px; padding: 0 2px; border-bottom: 4px solid #d3d4da; background: #f0f0f0; }
.layer-sheet { background: linear-gradient(#f0f0f0, #f0f0f0) 0 0 / 100% 12px no-repeat; }
.layers { width: 123px; }
.layers td { height: 14px; text-align: center; }
.layers th:nth-child(1) { width: 19px; }
.layers th:nth-child(2) { width: 20px; }
.layers td:last-child { text-align: left; padding-left: 2px; }
.tri { color: #777; }
.layers input {
  appearance: none;
  display: block;
  width: 8px;
  height: 8px;
  margin: 3px auto 0;
  border: 1px solid #999;
  border-radius: 1px;
  background: #fff;
}
.layers input:checked { border-color: #2f8cf0; background: #2f8cf0; }
.layers input:checked::before {
  content: "";
  display: block;
  width: 4px;
  height: 2px;
  margin: 1px;
  border: solid #fff;
  border-width: 0 0 1px 1px;
  transform: rotate(-45deg);
}

/* Drawing canvas */
.canvas { position: relative; flex: 1; min-width: 0; background: #000; }
.drawing { width: 100%; height: 100%; }
.axis { fill: #0d0; font: 8px "Liberation Sans", sans-serif; }

.viewbar {
  position: absolute;
  top: 0;
  right: 1px;
  display: flex;
  flex-direction: column;
  align-items: center;
  gap: 3px;
  width: 17px;
  padding: 4px 0;
  background: #999a9f;
}
.viewbar button { flex-direction: column; gap: 3px; }
.viewbar svg { width: 14px; height: 14px; }
.viewbar .caret { margin: 0; }
.viewbar hr { width: 13px; margin: 0; border: 0; border-top: 1px solid #666; }
```
